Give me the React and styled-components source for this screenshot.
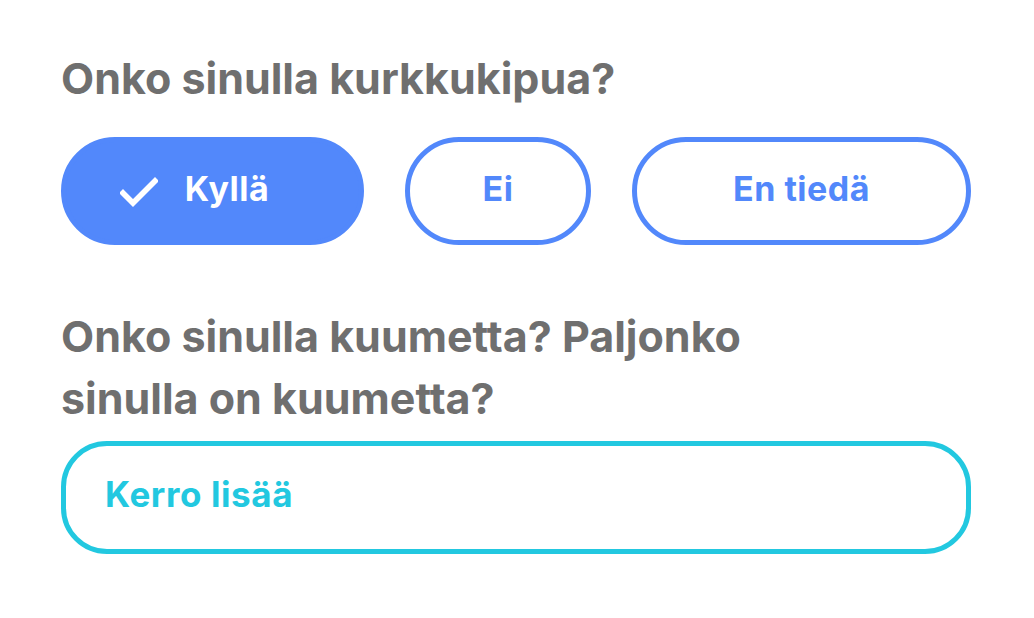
import React, { useState } from "react";
import styled, { createGlobalStyle } from "styled-components";

const GlobalStyle = createGlobalStyle`
  body {
    margin: 0;
    background: #ffffff;
    font-family: Inter, "Noto Sans", sans-serif;
  }
`;

const Page = styled.div`
  width: 910px;
  padding: 47px 0 0 61px;
`;

const Question = styled.h2`
  margin: ${(p) => p.$margin || "0"};
  font-size: 43px;
  font-weight: 700;
  line-height: 62px;
  letter-spacing: 0;
  color: #6f6f6f;
  max-width: ${(p) => p.$maxWidth || "none"};
`;

const Options = styled.div`
  display: flex;
  gap: 41px;
  margin-top: 28px;
`;

const Option = styled.button`
  display: flex;
  align-items: center;
  justify-content: center;
  gap: 27px;
  box-sizing: border-box;
  width: ${(p) => p.$width}px;
  height: 108px;
  padding: 0 0 6px;
  border-radius: 54px;
  border: 5px solid #5288fb;
  background: ${(p) => (p.$selected ? "#5288fb" : "#ffffff")};
  color: ${(p) => (p.$selected ? "#ffffff" : "#5288fb")};
  font-family: Inter, "Noto Sans", sans-serif;
  font-size: 34px;
  font-weight: 700;
  letter-spacing: 0.5px;
  cursor: pointer;
`;

const Check = styled.svg`
  width: 38px;
  height: 32px;
  margin-left: -36px;
  margin-top: 8px;
`;

const Field = styled.input`
  box-sizing: border-box;
  display: block;
  width: 910px;
  height: 113px;
  margin-top: 12px;
  padding: 0 0 8px 39px;
  border: 5px solid #22c8e0;
  border-radius: 46px;
  outline: none;
  font-family: Inter, "Noto Sans", sans-serif;
  font-size: 35px;
  font-weight: 700;
  letter-spacing: 0.6px;
  color: #22c8e0;

  &::placeholder {
    color: #22c8e0;
    opacity: 1;
  }
`;

const choices = [
  { label: "Kyllä", width: 303 },
  { label: "Ei", width: 186 },
  { label: "En tiedä", width: 339 },
];

export default function App() {
  const [picked, setPicked] = useState("Kyllä");

  return (
    <>
      <GlobalStyle />
      <Page>
        <Question>Onko sinulla kurkkukipua?</Question>
        <Options>
          {choices.map((c) => (
            <Option
              key={c.label}
              type="button"
              $width={c.width}
              $selected={picked === c.label}
              onClick={() => setPicked(c.label)}
            >
              {picked === c.label && (
                <Check viewBox="0 0 38 32" fill="none">
                  <path
                    d="M3 17 L13 27 L35 5"
                    stroke="#ffffff"
                    strokeWidth="5.5"
                    strokeLinecap="square"
                  />
                </Check>
              )}
              {c.label}
            </Option>
          ))}
        </Options>
        <Question $maxWidth="760px" $margin="60px 0 0">
          Onko sinulla kuumetta? Paljonko sinulla on kuumetta?
        </Question>
        <Field type="text" placeholder="Kerro lisää" />
      </Page>
    </>
  );
}
